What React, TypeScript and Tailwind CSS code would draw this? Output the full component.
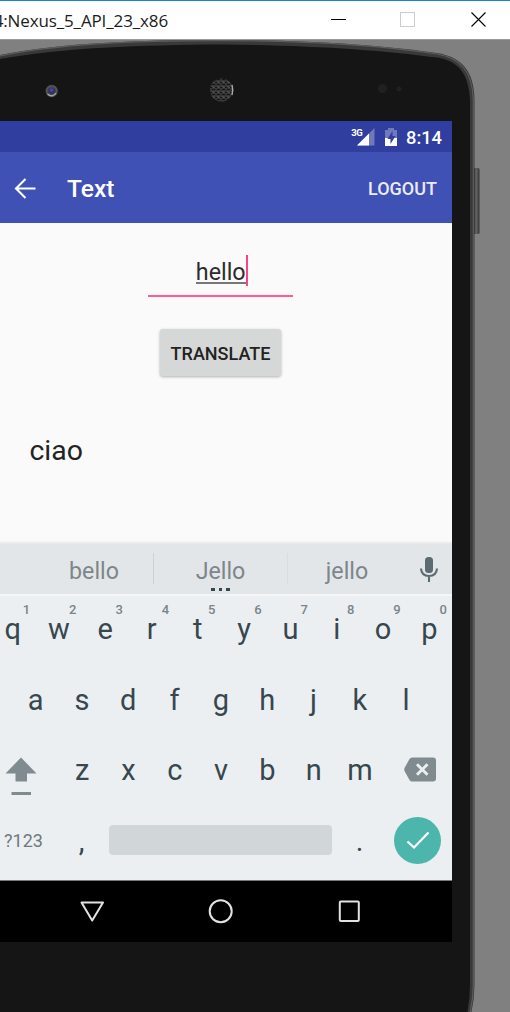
import React from "react";

const topKeys: [string, string][] = [
  ["q", "1"], ["w", "2"], ["e", "3"], ["r", "4"], ["t", "5"],
  ["y", "6"], ["u", "7"], ["i", "8"], ["o", "9"], ["p", "0"],
];
const homeKeys = ["a", "s", "d", "f", "g", "h", "j", "k", "l"];
const bottomKeys = ["z", "x", "c", "v", "b", "n", "m"];

function TitleBar() {
  return (
    <header className="flex h-[39px] items-center justify-between border-t border-[#1883d7] bg-white">
      <div className="flex w-[168px] shrink-0 justify-end overflow-hidden whitespace-nowrap font-['Open_Sans','Noto_Sans',sans-serif] text-[17px] leading-[24px] text-[#1c1c1c]">
        <span className="mt-px tracking-[-0.13px]">4:Nexus_5_API_23_x86</span>
      </div>
      <svg className="h-[38px] w-[180px]" viewBox="330 1 180 38" fill="none" shapeRendering="crispEdges">
        <path d="M331 19.5h15" stroke="#000" />
        <rect x="400.500" y="12.500" width="14" height="14" stroke="#ccc" />
        <path d="M471.500 12.500l14 14M485.500 12.500l-14 14" stroke="#000" strokeWidth="1.1" shapeRendering="auto" />
      </svg>
    </header>
  );
}

function PhoneShell() {
  return (
    <svg className="absolute left-0 top-0 h-[973px] w-[510px]" viewBox="0 39 510 973">
      <defs>
        <linearGradient id="side" x1="473" x2="480" y1="0" y2="0" gradientUnits="userSpaceOnUse">
          <stop offset="0" stopColor="#222" />
          <stop offset=".45" stopColor="#666" />
          <stop offset="1" stopColor="#2b2b2b" />
        </linearGradient>
        <radialGradient id="lens">
          <stop offset="0" stopColor="#302f80" />
          <stop offset=".45" stopColor="#34344a" />
          <stop offset=".8" stopColor="#5a5a5a" />
          <stop offset="1" stopColor="#252525" />
        </radialGradient>
        <pattern id="mesh" width="5" height="5" patternUnits="userSpaceOnUse">
          <path d="M0 1H3V4M4 0V3H5M1 3V5" fill="none" stroke="#666" strokeWidth=".8" />
        </pattern>
      </defs>
      <path d="M0 39.500H510" stroke="#999" />
      <rect x="473" y="168" width="6.500" height="66" rx="1.500" fill="url(#side)" />
      <path d="M-10 57C55 43 135 40 222 40C310 40 380 45 437 53C461 57 474 70 474.500 100V985Q474.500 1000 471 1014H-10Z" fill="#393939" />
      <path d="M-10 58C55 43.500 135 40.700 222 40.700C310 40.700 380 45.500 437 54C461 58 472.500 72 473.300 100V985Q473 1000 470 1013" fill="none" stroke="#5c5c5c" strokeWidth="1.200" />
      <path d="M-10 61C55 48 135 45 222 44.500C310 45 380 50 437 57.500C459 61 468.500 74 470 100V985Q470 1000 467 1014H-10Z" fill="#151515" />
      <circle cx="51.700" cy="91" r="6.500" fill="url(#lens)" />
      <circle cx="51.500" cy="90" r="1.800" fill="#4742c2" />
      <path d="M47.500 94q5 4 8.500-1" fill="none" stroke="#aaa" strokeWidth="1.300" />
      <circle cx="221.500" cy="90" r="11.500" fill="url(#mesh)" />
      <path d="M232 85q1.500 5 0 10" fill="none" stroke="#aaa" strokeWidth="1.400" />
      <circle cx="382.500" cy="88.500" r="4.500" fill="#202020" />
      <circle cx="399" cy="89" r="2.500" fill="#241f21" />
    </svg>
  );
}

function StatusBar() {
  return (
    <div className="flex h-[31px] items-center justify-end bg-[#303f9f] pr-[10px] text-white">
      <svg className="h-[31px] w-[50px]" viewBox="350 121 50 31">
        <path d="M357 145.500L374.500 128V145.500Z" fill="#7079bb" />
        <path d="M357 145.500L369 133.500V145.500Z" fill="#fff" />
        <text x="351.300" y="135.500" fontFamily="Roboto, sans-serif" fontSize="9.500" fontWeight="700" fill="#fff" textLength="11.500">3G</text>
        <path d="M385 130h3v-2h6v2h3v16h-12z" fill="#7079bb" />
        <path d="M385 138h12v8h-12z" fill="#fff" />
        <path d="M392.500 131l-5 8h3v5l5-8h-3z" fill="#303f9f" />
      </svg>
      <span className="ml-[6px] mt-[2px] text-[18.300px] font-medium leading-[24px]">8:14</span>
    </div>
  );
}

function AppBar() {
  return (
    <div className="flex h-[71px] items-center bg-[#3f51b5] pl-[14px] pr-[15px] text-white">
      <svg className="h-[24px] w-[23px]" viewBox="0 0 23 24" fill="none" stroke="#fff" strokeWidth="2.100">
        <path d="M21.500 12.500H2M11.500 3L2 12.500l9.500 9.500" />
      </svg>
      <h1 className="ml-[30px] mt-[4px] text-[24.500px] font-medium">Text</h1>
      <button className="ml-auto mt-[2px] text-[18px] font-medium text-[#ececf7]">LOGOUT</button>
    </div>
  );
}

function Content() {
  return (
    <main className="flex h-[318px] flex-col items-center bg-[#fafafa] pr-[11px]">
      <div className="mt-[31px] flex h-[43px] w-[145px] items-start justify-center border-b-2 border-[#ff5c93] pl-[3px]">
        <span className="mt-[6px] h-[24px] border-b-2 border-[#777] text-[23.300px] leading-[24px] text-[#2c2c2c]">hello</span>
        <i className="mt-px h-[31px] w-[2.500px] bg-[#ff4081]" />
      </div>
      <button className="mt-[32px] h-[47px] w-[121px] rounded-[3px] bg-[#d6d7d7] pt-[2px] text-[18px] font-medium text-[#222] shadow-[0_1px_3px_rgba(0,0,0,0.3)]">TRANSLATE</button>
      <p className="ml-[29.500px] mt-[56.500px] self-start text-[28.400px] leading-[36px] text-[#222]">ciao</p>
    </main>
  );
}

function Suggestions() {
  return (
    <div className="flex h-[53px] flex-col">
      <div className="h-[3px] bg-gradient-to-b from-[#f7f7f7] to-[#e4e7e8]" />
      <div className="flex h-[50px] items-center bg-[#e2e6e9] pb-px pl-[34px] text-[23.200px] text-[#7d868a]">
        <span className="w-[119px] pl-px pt-[5px] text-center">bello</span>
        <i className="h-[31px] w-px bg-[#ccd1d4]" />
        <span className="relative w-[133px] pt-[5px] text-center">
          Jello
          <i className="absolute left-[57px] top-[39px] flex gap-[4px]">
            <b className="size-[3.500px] bg-[#37474f]" />
            <b className="size-[3.500px] bg-[#37474f]" />
            <b className="size-[3.500px] bg-[#37474f]" />
          </i>
        </span>
        <i className="h-[31px] w-px bg-[#d9dde0]" />
        <span className="w-[118px] pt-[5px] text-center">jello</span>
        <svg className="ml-[13px] mt-px h-[27px] w-[20px]" viewBox="0 0 20 27" fill="none">
          <rect x="6" y="1" width="8" height="16" rx="3.500" fill="#5c6b72" />
          <path d="M2 12.500Q2.500 20 10 20T18 12.500M10 20v6" stroke="#5c6b72" strokeWidth="2.100" />
        </svg>
      </div>
    </div>
  );
}

function Key({ label, hint }: { label: string; hint?: string }) {
  return (
    <button className="relative flex w-[46.300px] shrink-0 items-center justify-center pl-px">
      {label}
      {hint && <sup className="absolute left-[32.500px] top-[9px] w-[10px] text-center text-[13px] font-medium leading-[14px] text-[#78858b]">{hint}</sup>}
    </button>
  );
}

function Keyboard() {
  return (
    <div className="flex h-[287px] flex-col border-b border-[#777a7c] bg-[#eceff1] text-[29px] leading-[34px] text-[#37474f] shadow-[inset_0_2px_0_#f4f6f7]">
      <div className="ml-[-11px] flex h-[70.500px]">
        {topKeys.map(([k, h]) => <Key key={k} label={k} hint={h} />)}
      </div>
      <div className="ml-[12px] flex h-[70.500px]">
        {homeKeys.map((k) => <Key key={k} label={k} />)}
      </div>
      <div className="flex h-[70.500px] items-center">
        <svg className="ml-[5px] mt-[11px] h-[40px] w-[53.500px]" viewBox="5 756 53.500 40" fill="#7f8b8f">
          <path d="M21 757.500L36.500 773.500H27V781.500H15.500V773.500H5.500Z" />
          <path d="M11.500 792h19.500v3h-19.500z" />
        </svg>
        {bottomKeys.map((k) => <Key key={k} label={k} />)}
        <svg className="ml-[20.500px] h-[26px] w-[34px]" viewBox="403 757 34 26">
          <path d="M412 757.500H433Q436 757.500 436 760.500V778.500Q436 781.500 433 781.500H412Q410.500 781.500 409.500 780L404.500 771Q404 769.500 404.500 768L409.500 759Q410.500 757.500 412 757.500Z" fill="#7f8b8f" />
          <path d="M417 764.300l10.500 10.500M427.500 764.300l-10.500 10.500" stroke="#eceff1" strokeWidth="2.900" />
        </svg>
      </div>
      <div className="flex h-[70.500px] items-center">
        <button className="w-[47px] text-[18px] text-[#6e7a80]">?123</button>
        <button className="w-[62px] pl-[7px]">,</button>
        <button className="mb-px h-[30px] w-[223px] rounded-[4px] bg-[#d1d6d9]" aria-label="Space" />
        <button className="w-[62px] pr-[7px]">.</button>
        <button className="flex size-[47px] items-center justify-center rounded-full bg-[#4db6ac]" aria-label="Done">
          <svg className="size-[26px]" viewBox="0 0 26 26" fill="none" stroke="#fff" strokeWidth="2.300">
            <path d="M2.500 13.500l6.500 6L23.500 4.500" />
          </svg>
        </button>
      </div>
    </div>
  );
}

function NavBar() {
  return (
    <nav className="h-[61px] bg-black">
      <svg className="h-[61px] w-[452px]" viewBox="0 881 452 61" fill="none" stroke="#e2e2e2" strokeWidth="2">
        <path d="M81.500 902.500H103L92.200 920.500Z" strokeLinejoin="round" />
        <circle cx="220.700" cy="911.300" r="11" />
        <rect x="339.800" y="901.500" width="19" height="19.500" rx="1" />
      </svg>
    </nav>
  );
}

export default function App() {
  return (
    <div className="h-[1012px] w-[510px] overflow-hidden bg-[#808080] font-[Roboto,sans-serif]">
      <TitleBar />
      <div className="relative h-[973px] overflow-hidden pt-[82px]">
        <PhoneShell />
        <div className="relative flex w-[452px] flex-col overflow-hidden bg-black">
          <StatusBar />
          <AppBar />
          <Content />
          <Suggestions />
          <Keyboard />
          <NavBar />
        </div>
      </div>
    </div>
  );
}
